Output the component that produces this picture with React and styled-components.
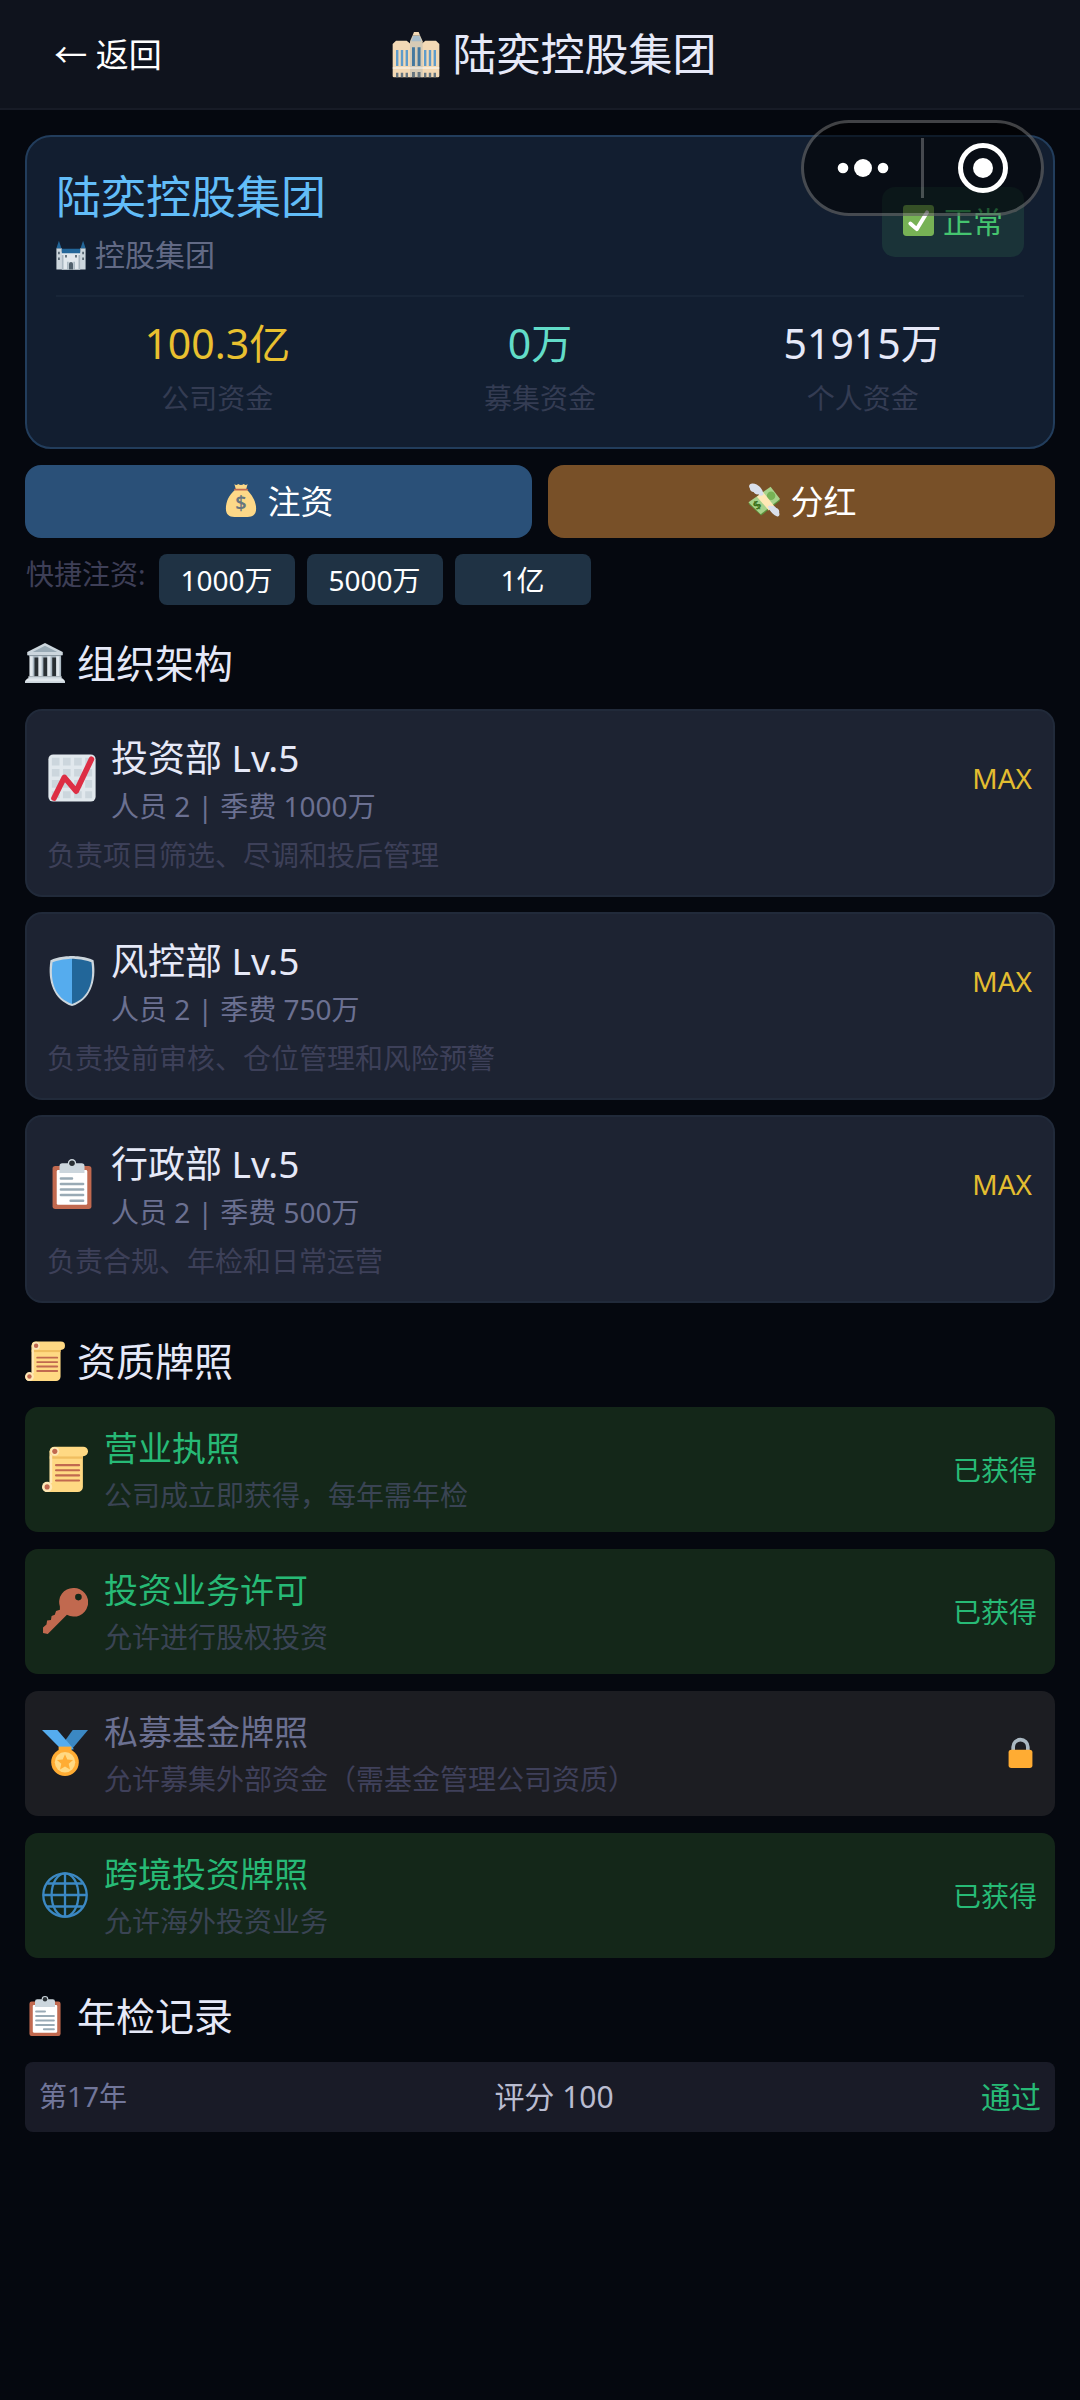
import React from "react";
import styled, { createGlobalStyle } from "styled-components";

const GlobalStyle = createGlobalStyle`
  * {
    box-sizing: border-box;
  }

  body {
    margin: 0;
    min-height: 100vh;
    background: #05080f;
    color: #e6e9f8;
    font-family: "Noto Sans", "Noto Sans CJK SC", sans-serif;
    font-size: 28px;
  }

  h1, h2, h3, p, ul, dl, dd {
    margin: 0;
    padding: 0;
    font-weight: 400;
  }

  button {
    border: 0;
    padding: 0;
    color: #fff;
    font-family: inherit;
    cursor: pointer;
  }
`;

/* ---------- icons ---------- */

const Svg = styled.svg`
  display: block;
  flex: none;
  width: ${props => props.$size}px;
  height: ${props => props.$size}px;
`;

const drawings = {
  office: (
    <>
      <path fill="#F3D9B5" d="M.5 33V10.500L3 8h8l3 2.500V35.500H1.500Q.5 35.500.5 34.500zM22 35.500v-25L25 8h8l2.500 2.500v24q0 1-1 1z" />
      <path fill="#D6CBB6" d="M13.500 35.500V8.500L15.500 4h5.500l2 4.500v27z" />
      <path fill="#F3D9B5" d="M15.500 4l1-2.500h3.500L21 4z" />
      <path fill="#A7BDCB" d="M14.500 8.500L16 4.500h4.500L22 8.500z" />
      <path fill="#5F9CCB" d="M3 15h1.800v12H3zM6.600 15h1.800v12H6.600zM10.200 15H12v12h-1.800zM24 15h1.800v12H24zM27.600 15h1.800v12h-1.800zM31.200 15H33v12h-1.800z" />
      <path fill="#43789F" d="M15 13h2.200v14H15zM19.200 13h2.200v14h-2.200z" />
      <path fill="#fff" opacity=".6" d="M.5 28h35v1H.5z" />
      <path fill="#66757F" d="M3 32h1.800v3.500H3zM6.600 32h1.800v3.500H6.600zM10.200 32H12v3.500h-1.800zM15 31.500h2.200v4H15zM19.200 31.500h2.200v4h-2.200zM24 32h1.800v3.500H24zM27.600 32h1.800v3.500h-1.800zM31.200 32H33v3.500h-1.800z" />
    </>
  ),
  castle: (
    <>
      <path fill="#CCD6DD" d="M.5 10h6.500v4h22v-4h6.500v25.500H.5z" />
      <path fill="#E1E8ED" d="M7 15h22v20.500H7z" />
      <path fill="#226699" d="M3.500 1L6.500 10h-6zM32.500 1l3 9h-6zM7 10.500h22V16H7z" />
      <path fill="#AAB8C2" d="M7 18h2v17.500H7zM27 18h2v17.500h-2z" />
      <path fill="#50606C" d="M2.500 14h2v3h-2zM31.500 14h2v3h-2zM2.500 21h2v3h-2zM31.500 21h2v3h-2zM11 18h2v3h-2zM23 18h2v3h-2zM15.500 35.500V29a2.500 2.500 0 015 0v6.500z" />
      <path fill="#99AAB5" d="M13.500 35.500V26h1.500v9.500zM21 35.500V26h1.500v9.500z" />
    </>
  ),
  check: (
    <>
      <rect width="36" height="36" rx="4" fill="#77B255" />
      <path fill="none" stroke="#fff" strokeWidth="4.500" strokeLinecap="round" strokeLinejoin="round" d="M8.500 21.500l7.500 6.500L28 8.500" />
    </>
  ),
  moneybag: (
    <>
      <path fill="#FDD888" d="M12 7C5 13 2 20 2 27c0 6 3 9 9 9h14c6 0 9-3 9-9 0-7-4-14-10-20z" />
      <path fill="#FDD888" d="M11 1q2 2 4 0 3 2 6 0 2 2 4 0l-1.500 5.500h-11z" />
      <path fill="none" stroke="#BF6952" strokeWidth="2" strokeLinecap="round" d="M11.500 7h13" />
      <text x="18" y="29" textAnchor="middle" fontSize="21" fontWeight="600" fill="#67757F">$</text>
    </>
  ),
  flyingMoney: (
    <>
      <path fill="#5C913B" d="M1.500 22L25 5l10 13.500L15 34.500z" />
      <path fill="#A7D28B" d="M1.500 20.500L25 4l10 13L14.500 33z" />
      <circle cx="25.500" cy="13.500" r="4.500" fill="#77B255" />
      <path fill="#FFE8B6" d="M10.500 14.500L17 9.500l12 15-6 4.500z" />
      <text x="11" y="28" textAnchor="middle" fontSize="13" fontWeight="700" fill="#3E721D" transform="rotate(-35 11 24)">$</text>
      <path fill="#D9DFEA" d="M17.500 12.500C17 6 12 1 6 .5 3 .3 1 3 3 5.500c0 2.500 2 4 4 4 1 2 3 3 5 2.500 1 1.500 3 2 5.500.5zM22 25c2 5 6 9 10 10.500 2 .5 3-2 2-4 .5-3-1-4.500-3-5-1-2-3-2.500-4.500-2-1.500-1-3-1-4.500.5z" />
    </>
  ),
  institution: (
    <>
      <path fill="#292F33" d="M5 12h26v18H5z" />
      <path fill="#CCD6DD" d="M18 0L2 8v3h32V8z" />
      <path fill="#99AAB5" d="M18 2.500L7 8h22z" />
      <path fill="#AAB8C2" d="M3 11h30l-2 2H5z" />
      <path fill="#E1E8ED" d="M4 12h4v18H4zM12 12h4v18h-4zM20 12h4v18h-4zM28 12h4v18h-4z" />
      <path fill="#AAB8C2" d="M7 12h1.500v18H7zM15 12h1.500v18H15zM23 12h1.500v18H23zM31 12h1.500v18H31z" />
      <path fill="#CCD6DD" d="M3 30h30v2l3 2.500V36H0v-1.500L3 32z" />
      <path fill="#E1E8ED" d="M2 32h32l2 2.500H0z" />
    </>
  ),
  chart: (
    <>
      <rect x="1" y="1" width="34" height="34" rx="3.500" fill="#E1E8ED" />
      <path fill="#CCD6DD" d="M3.500 3.500h5.500V9H3.500zM11.500 3.500H17V9h-5.500zM19.500 3.500H25V9h-5.500zM27.500 3.500h5V9h-5zM3.500 11.500h5.500V17H3.500zM11.500 11.500H17V17h-5.500zM19.500 11.500H25V17h-5.500zM27.500 11.500h5V17h-5zM3.500 19.500h5.500V25H3.500zM11.500 19.500H17V25h-5.500zM19.500 19.500H25V25h-5.500zM27.500 19.500h5V25h-5zM3.500 27.500h5.500v5H3.500zM11.500 27.500H17v5h-5.500zM19.500 27.500H25v5h-5.500zM27.500 27.500h5v5h-5z" />
      <path fill="none" stroke="#DD2E44" strokeWidth="4" strokeLinecap="round" strokeLinejoin="round" d="M5 32.500L12.500 17.500l8.500 10L32 4.500" />
    </>
  ),
  shield: (
    <>
      <path fill="#CCD6DD" d="M33.500 3C27 0 18 0 18 0S9 0 2.500 3C0 18 5 32 18 36 31 32 36 18 33.500 3z" />
      <path fill="#55ACEE" d="M18 34.500C6 30.500 2 19 4 4.500 11 2 18 2 18 2z" />
      <path fill="#226699" d="M18 34.500c12-4 16-15.500 14-30C25 2 18 2 18 2z" />
    </>
  ),
  clipboard: (
    <>
      <rect x="4" y="5" width="28" height="31" rx="2" fill="#C1694F" />
      <rect x="7" y="8" width="22" height="25" rx="1" fill="#fff" />
      <path fill="#CCD6DD" d="M25 3h-4a3 3 0 00-6 0h-4a2 2 0 00-2 2v5h18V5a2 2 0 00-2-2z" />
      <circle cx="18" cy="3" r="2" fill="#292F33" />
      <path stroke="#99AAB5" strokeWidth="1.800" strokeLinecap="round" d="M10 14h8M10 18h16M10 22h16M10 26h16M17 30h9" />
    </>
  ),
  scroll: (
    <>
      <path fill="#FFD983" d="M6 4h26v28a4 4 0 01-4 4H4a3.500 3.500 0 010-7h2z" />
      <path fill="#F0BE60" d="M6 8h26v2H6z" />
      <path fill="#FFE8B6" d="M9 1a3.800 3.800 0 00-3 3.500V29h2V8z" />
      <rect x="6" y=".5" width="30" height="7.500" rx="3.700" fill="#FFD983" />
      <circle cx="10" cy="4.200" r="3.500" fill="#FFE8B6" />
      <circle cx="10" cy="4.200" r="2" fill="#C1694F" />
      <circle cx="4" cy="32" r="4" fill="#FFE8B6" />
      <circle cx="4" cy="32" r="2" fill="#C1694F" />
      <path stroke="#C1694F" strokeWidth="1.700" strokeLinecap="round" d="M11 15h18M11 19h18M11 23h18M11 27h18" />
    </>
  ),
  key: (
    <path
      fill="#C1694F"
      fillRule="evenodd"
      d="M24.500 0A11 11 0 0014 14.500L14 17l-3 1-1 3-2.500 1-.5 3-3 .5-.5 3L.8 31v4.200L4.500 36l15-15A11.200 11.200 0 1024.500 0zM28.500 4.500a2.600 2.600 0 110 5.200 2.600 2.600 0 010-5.200z"
    />
  ),
  medal: (
    <>
      <path fill="#3B88C3" d="M24 0h12L22.500 16l-7-4z" />
      <path fill="#55ACEE" d="M0 0h12l13 15-9 1z" />
      <path fill="#FFAC33" d="M13 13h10v3H13z" />
      <circle cx="18" cy="25.200" r="10.800" fill="#FFAC33" />
      <circle cx="18" cy="25.200" r="8" fill="#FFD983" />
      <path fill="#FFAC33" d="M18 19l1.800 4.100 4.500.4-3.400 3 1 4.400-3.900-2.300-3.900 2.300 1-4.400-3.400-3 4.500-.4z" />
    </>
  ),
  globe: (
    <g fill="none" stroke="#3B88C3" strokeWidth="1.800">
      <circle cx="18" cy="18" r="17" />
      <ellipse cx="18" cy="18" rx="10.500" ry="17" />
      <path d="M18 1v34M1 18h34M4 9h28M4 27h28" />
    </g>
  ),
  lock: (
    <>
      <path fill="none" stroke="#AAB8C2" strokeWidth="4" d="M10 18v-6a8 8 0 0116 0v6" />
      <rect x="5" y="15" width="26" height="20" rx="3" fill="#FFAC33" />
    </>
  ),
};

const Emoji = ({ name, size }) => (
  <Svg $size={size} viewBox="0 0 36 36" aria-hidden="true">
    {drawings[name]}
  </Svg>
);

/* ---------- header ---------- */

const Header = styled.header`
  display: flex;
  align-items: center;
  height: 110px;
  padding: 0 24px;
  background: #0f131d;
  border-bottom: 2px solid #171b26;
`;

const BackButton = styled.button`
  width: 168px;
  height: 64px;
  padding-bottom: 2px;
  background: transparent;
  font-size: 33px;
`;

const PageTitle = styled.h1`
  flex: 1;
  display: flex;
  align-items: center;
  justify-content: center;
  gap: 13px;
  font-size: 44px;
  line-height: 60px;
`;

const HeaderSide = styled.div`
  width: 140px;
`;

/* floating host menu */

const Capsule = styled.div`
  position: absolute;
  top: 120px;
  right: 36px;
  display: flex;
  align-items: center;
  width: 243px;
  height: 96px;
  border: 3px solid rgba(255, 255, 255, 0.25);
  border-radius: 48px;
  background: rgba(0, 0, 0, 0.55);
`;

const CapsuleButton = styled.button`
  flex: 1;
  display: flex;
  align-items: center;
  justify-content: center;
  height: 100%;
  background: transparent;
`;

const CapsuleDivider = styled.span`
  width: 3px;
  height: 60px;
  background: rgba(255, 255, 255, 0.25);
`;

/* ---------- layout ---------- */

const Main = styled.main`
  padding: 25px;
`;

const Summary = styled.section`
  padding: 30px 29px 31px;
  border: 2px solid #223d5c;
  border-radius: 26px;
  background: #121e30;
`;

const SummaryHead = styled.div`
  display: flex;
  align-items: center;
  justify-content: space-between;
  padding-bottom: 18px;
  border-bottom: 2px solid #182537;
`;

const CompanyName = styled.h2`
  color: #62bdf8;
  font-size: 45px;
  line-height: 60px;
`;

const CompanyType = styled.p`
  display: flex;
  align-items: center;
  gap: 9px;
  margin-top: 6px;
  color: #626a85;
  font-size: 30px;
  line-height: 44px;
`;

const Status = styled.span`
  display: flex;
  align-items: center;
  gap: 9px;
  height: 70px;
  padding: 0 21px 4px;
  border-radius: 13px;
  background: #1a3338;
  color: #45c46f;
  font-size: 30px;
`;

const Stats = styled.dl`
  display: grid;
  grid-template-columns: repeat(3, 1fr);
  padding-top: 20px;
  text-align: center;
`;

const Stat = styled.div`
  display: flex;
  flex-direction: column-reverse;
  gap: 11px;
`;

const StatValue = styled.dd`
  color: ${props => props.$color};
  font-size: 41px;
  line-height: 52px;
`;

const StatLabel = styled.dt`
  color: #343c53;
  font-size: 28px;
  line-height: 36px;
`;

const Actions = styled.div`
  display: flex;
  gap: 16px;
  margin-top: 16px;
`;

const ActionButton = styled.button`
  flex: 1;
  display: flex;
  align-items: center;
  justify-content: center;
  gap: 10px;
  height: 73px;
  padding-bottom: 4px;
  border-radius: 16px;
  background: ${props => props.$color};
  font-size: 33px;
`;

const Quick = styled.div`
  display: flex;
  gap: 12px;
  margin-top: 16px;
`;

const QuickLabel = styled.span`
  padding: 0 1px;
  color: #3e3f57;
  font-size: 28px;
  line-height: 40px;
`;

const QuickButton = styled.button`
  width: 136px;
  height: 51px;
  padding-bottom: 2px;
  border-radius: 8px;
  background: #1f3244;
  font-size: 28px;
`;

const SectionTitle = styled.h2`
  display: flex;
  align-items: center;
  gap: 12px;
  margin: 34px 0 22px;
  font-size: 39px;
  line-height: 48px;
`;

const List = styled.ul`
  display: flex;
  flex-direction: column;
  gap: ${props => props.$gap}px;
  list-style: none;
`;

const Grow = styled.div`
  flex: 1;
`;

/* ---------- departments ---------- */

const Dept = styled.li`
  padding: 21px 21px 22px 20px;
  border: 2px solid #212a3a;
  border-radius: 17px;
  background: #1d2332;
`;

const DeptRow = styled.div`
  display: flex;
  align-items: center;
  gap: 14px;
`;

const DeptName = styled.h3`
  font-size: 37px;
  line-height: 52px;
`;

const DeptMeta = styled.p`
  margin-top: 4px;
  color: #6b7091;
  font-size: 28px;
  line-height: 36px;
`;

const DeptDesc = styled.p`
  margin-top: 13px;
  color: #3d4059;
  font-size: 28px;
  line-height: 36px;
`;

const Max = styled.span`
  color: #e3bd30;
  font-size: 28px;
`;

/* ---------- licenses ---------- */

const License = styled.li`
  display: flex;
  align-items: center;
  gap: 16px;
  padding: 17px 18px 19px 17px;
  border-radius: 13px;
  background: ${props => (props.$owned ? "#142719" : "#1c1d22")};
`;

const LicenseName = styled.h3`
  color: ${props => (props.$owned ? "#27ba76" : "#6b7091")};
  font-size: 34px;
  line-height: 48px;
`;

const LicenseDesc = styled.p`
  margin-top: 5px;
  color: ${props => (props.$owned ? "#3a4454" : "#3f405a")};
  font-size: 28px;
  line-height: 36px;
`;

const Owned = styled.span`
  color: #27ba76;
  font-size: 28px;
`;

/* ---------- annual reviews ---------- */

const Review = styled.li`
  display: flex;
  align-items: center;
  justify-content: space-between;
  height: 70px;
  padding: 0 14px 4px;
  border-radius: 8px;
  background: #191b27;
  font-size: 30px;
`;

const ReviewYear = styled.span`
  color: #71769a;
  font-size: 28px;
`;

const ReviewScore = styled.span`
  color: #b9bcd0;
`;

const ReviewResult = styled.span`
  color: #27ba76;
`;

const stats = [
  { label: "公司资金", value: "100.3亿", color: "#e9c02f" },
  { label: "募集资金", value: "0万", color: "#62dcc8" },
  { label: "个人资金", value: "51915万", color: "#e6e9f8" },
];

const departments = [
  { icon: "chart", name: "投资部", level: 5, staff: 2, fee: "1000万", desc: "负责项目筛选、尽调和投后管理" },
  { icon: "shield", name: "风控部", level: 5, staff: 2, fee: "750万", desc: "负责投前审核、仓位管理和风险预警" },
  { icon: "clipboard", name: "行政部", level: 5, staff: 2, fee: "500万", desc: "负责合规、年检和日常运营" },
];

const licenses = [
  { icon: "scroll", name: "营业执照", desc: "公司成立即获得，每年需年检", owned: true },
  { icon: "key", name: "投资业务许可", desc: "允许进行股权投资", owned: true },
  { icon: "medal", name: "私募基金牌照", desc: "允许募集外部资金（需基金管理公司资质）", owned: false },
  { icon: "globe", name: "跨境投资牌照", desc: "允许海外投资业务", owned: true },
];

const reviews = [{ year: 17, score: 100, result: "通过" }];

export default function App() {
  return (
    <>
      <GlobalStyle />
      <Header>
        <BackButton type="button">← 返回</BackButton>
        <PageTitle>
          <Emoji name="office" size={48} />
          陆奕控股集团
        </PageTitle>
        <HeaderSide />
      </Header>

      <Main>
        <Summary>
          <SummaryHead>
            <div>
              <CompanyName>陆奕控股集团</CompanyName>
              <CompanyType>
                <Emoji name="castle" size={30} />
                控股集团
              </CompanyType>
            </div>
            <Status>
              <Emoji name="check" size={31} />
              正常
            </Status>
          </SummaryHead>
          <Stats>
            {stats.map(stat => (
              <Stat key={stat.label}>
                <StatLabel>{stat.label}</StatLabel>
                <StatValue $color={stat.color}>{stat.value}</StatValue>
              </Stat>
            ))}
          </Stats>
        </Summary>

        <Actions>
          <ActionButton type="button" $color="#2a5078">
            <Emoji name="moneybag" size={34} />
            注资
          </ActionButton>
          <ActionButton type="button" $color="#785028">
            <Emoji name="flyingMoney" size={34} />
            分红
          </ActionButton>
        </Actions>

        <Quick>
          <QuickLabel>快捷注资:</QuickLabel>
          {["1000万", "5000万", "1亿"].map(amount => (
            <QuickButton type="button" key={amount}>
              {amount}
            </QuickButton>
          ))}
        </Quick>

        <SectionTitle>
          <Emoji name="institution" size={40} />
          组织架构
        </SectionTitle>
        <List $gap={15}>
          {departments.map(dept => (
            <Dept key={dept.name}>
              <DeptRow>
                <Emoji name={dept.icon} size={50} />
                <Grow>
                  <DeptName>{`${dept.name} Lv.${dept.level}`}</DeptName>
                  <DeptMeta>{`人员 ${dept.staff} | 季费 ${dept.fee}`}</DeptMeta>
                </Grow>
                <Max>MAX</Max>
              </DeptRow>
              <DeptDesc>{dept.desc}</DeptDesc>
            </Dept>
          ))}
        </List>

        <SectionTitle>
          <Emoji name="scroll" size={40} />
          资质牌照
        </SectionTitle>
        <List $gap={17}>
          {licenses.map(({ icon, name, desc, owned }) => (
            <License key={name} $owned={owned}>
              <Emoji name={icon} size={46} />
              <Grow>
                <LicenseName $owned={owned}>{name}</LicenseName>
                <LicenseDesc $owned={owned}>{desc}</LicenseDesc>
              </Grow>
              {owned ? <Owned>已获得</Owned> : <Emoji name="lock" size={33} />}
            </License>
          ))}
        </List>

        <SectionTitle>
          <Emoji name="clipboard" size={40} />
          年检记录
        </SectionTitle>
        <List $gap={15}>
          {reviews.map(({ year, score, result }) => (
            <Review key={year}>
              <ReviewYear>{`第${year}年`}</ReviewYear>
              <ReviewScore>{`评分 ${score}`}</ReviewScore>
              <ReviewResult>{result}</ReviewResult>
            </Review>
          ))}
        </List>
      </Main>

      <Capsule>
        <CapsuleButton type="button" aria-label="更多">
          <svg width="52" height="20" viewBox="0 0 52 20" fill="#fff">
            <circle cx="6" cy="10" r="5.300" />
            <circle cx="26" cy="10" r="9" />
            <circle cx="46" cy="10" r="5.300" />
          </svg>
        </CapsuleButton>
        <CapsuleDivider />
        <CapsuleButton type="button" aria-label="关闭">
          <svg width="50" height="50" viewBox="0 0 50 50">
            <circle cx="25" cy="25" r="22.500" fill="none" stroke="#fff" strokeWidth="5" />
            <circle cx="25" cy="25" r="10" fill="#fff" />
          </svg>
        </CapsuleButton>
      </Capsule>
    </>
  );
}
